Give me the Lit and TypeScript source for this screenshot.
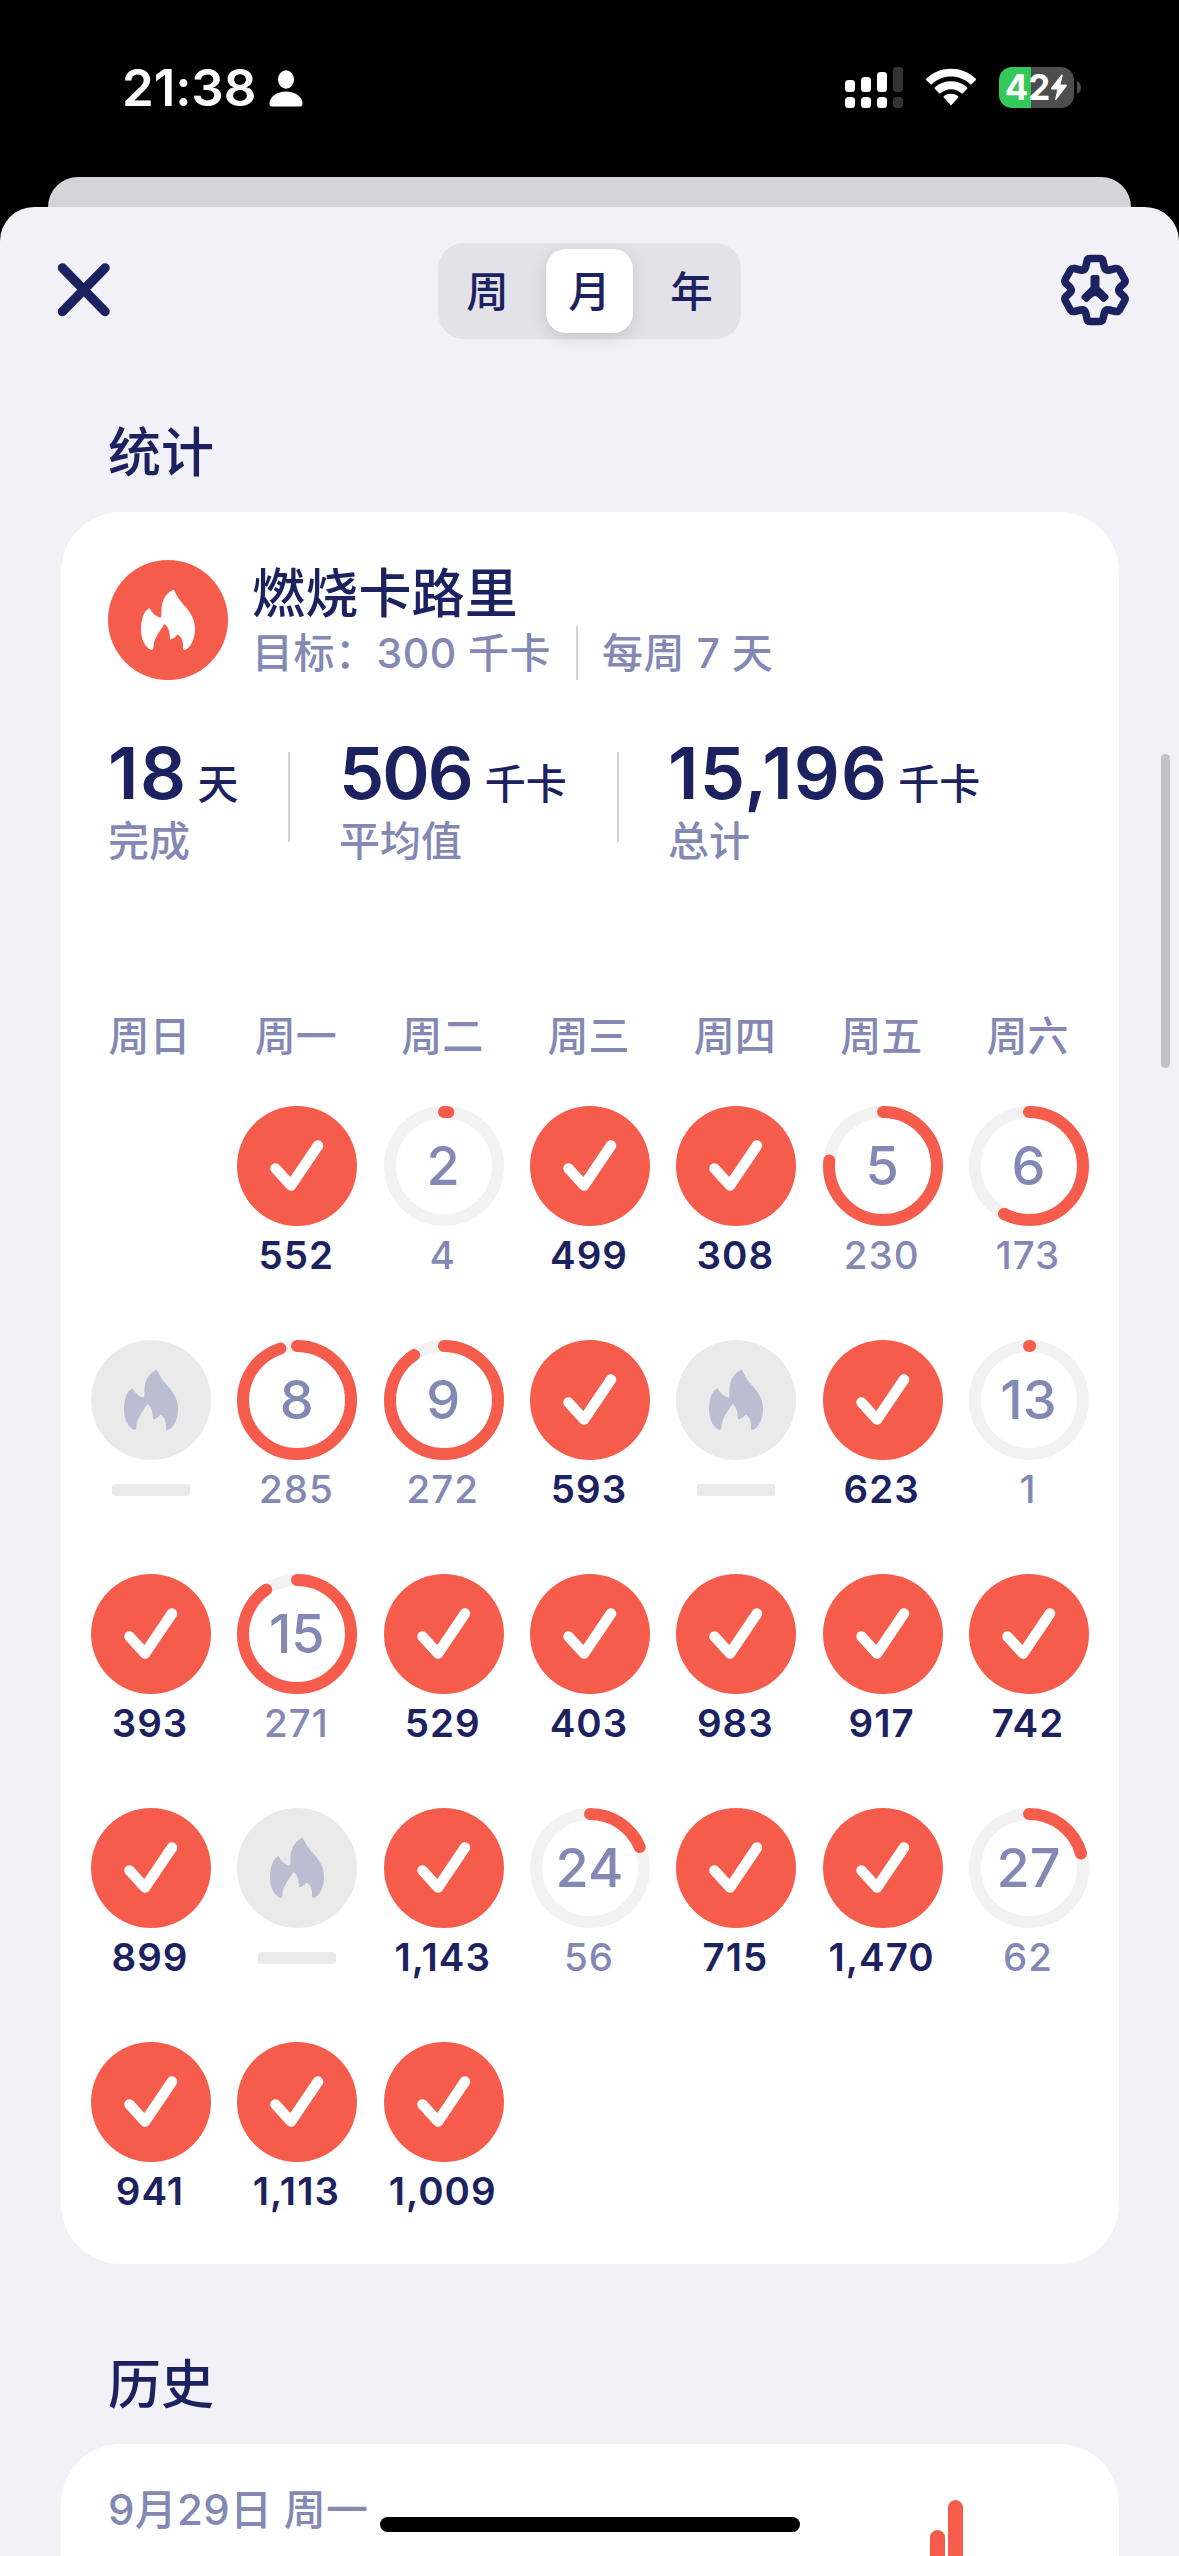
import { LitElement, html, svg, css, nothing } from "lit";
import { customElement, property } from "lit/decorators.js";

type Day = { day: number; value: number | null };

const GOAL = 300;
const WEEKDAYS = ["周日", "周一", "周二", "周三", "周四", "周五", "周六"];
const VALUES: (number | null)[] = [
  552, 4, 499, 308, 230, 173,
  null, 285, 272, 593, null, 623, 1,
  393, 271, 529, 403, 983, 917, 742,
  899, null, 1143, 56, 715, 1470, 62,
  941, 1113, 1009,
];
const DAYS: Day[] = VALUES.map((value, i) => ({ day: i + 1, value }));

const flame = svg`<path d="M64.5 30 C57 34 53.5 42 53.5 50 C53.5 53 53.5 55 53 57.5 C48 57 44 53 41.5 48 C35.5 51 33 60 33 69 C33 79 36.500 87 43.500 90 C45 90 45.500 88.500 45.500 86 C46 77.500 53 70 56.500 64 C60 66 62 72 62 79.500 C66 79 68 76.500 69.500 74.500 C74 77 75.500 82 75 88 C75 90 76.500 90.500 78 89.500 C84 86 87 77 87 69 C87 57 80 49.500 74 43 C70 38 68 34 66.500 31 C66 30 65.500 29.500 64.500 30 Z"/>`;

const shared = css`
  * { box-sizing: border-box; }
  svg { display: block; }
`;

@customElement("status-bar")
export class StatusBar extends LitElement {
  static styles = [shared, css`
    :host {
      display: flex; justify-content: space-between; height: 177px;
      padding: 0 98px 0 122px; color: #fff;
    }
    .left { display: flex; align-items: center; height: 177px; gap: 13px; }
    .time { font-size: 51px; line-height: 60px; font-weight: 600; letter-spacing: -0.1px; margin-top: -1px; }
    .right { display: flex; align-items: flex-start; padding-top: 67px; }
    .wifi { margin: 0 22px; }
    .battery {
      display: flex; align-items: center; justify-content: center; width: 75px; height: 41px;
      border-radius: 13px; background: linear-gradient(90deg, #34c759 32px, #4d4d4d 32px);
      font-size: 35px; font-weight: 700; line-height: 41px;
    }
    .cap { margin: 14px 0 0 3px; }
  `];

  render() {
    return html`
      <div class="left">
        <span class="time">21:38</span>
        <svg width="34" height="37" viewBox="0 0 34 37" fill="#fff">
          <ellipse cx="17" cy="9.500" rx="8" ry="9.200" />
          <path d="M3 36.500 Q.5 36.500 .5 33.500 C.5 27 8 21.500 17 21.500 S33.500 27 33.500 33.500 Q33.500 36.500 31 36.500 Z" />
        </svg>
      </div>
      <div class="right">
        <svg width="58" height="41" viewBox="0 0 58 41" fill="#fff">
          <rect y="13" width="10" height="12" rx="3.500" /><rect y="30" width="10" height="11" rx="3.500" />
          <rect x="16" y="10" width="10" height="15" rx="3.500" /><rect x="16" y="30" width="10" height="11" rx="3.500" />
          <rect x="32" y="5" width="10" height="20" rx="3.500" /><rect x="32" y="30" width="10" height="11" rx="3.500" />
          <g fill="#333"><rect x="48" width="10" height="25" rx="3.500" /><rect x="48" y="30" width="10" height="11" rx="3.500" /></g>
        </svg>
        <svg class="wifi" width="52" height="41" viewBox="0 0 52 41" fill="#fff">
          <path d="M1.500 13.500 Q.5 12.500 1.500 11.500 C15 -1.500 37 -1.500 50.500 11.500 Q51.500 12.500 50.500 13.500 L46.500 17.300 Q46 17.800 45.200 17.200 C34 7 18 7 6.800 17.200 Q6 17.800 5.500 17.300 Z" />
          <path d="M10 22 Q9 21.200 10 20.200 C19 12.300 33 12.300 42 20.200 Q43 21.200 42 22 L37.800 26.300 Q37.200 26.800 36.500 26.200 C30 20.800 22 20.800 15.500 26.200 Q14.800 26.800 14.200 26.300 Z" />
          <path d="M18.800 30.500 Q18 29.800 19 29 C23 26 29 26 33 29 Q34 29.800 33.200 30.500 L26.800 37.500 Q26 38.500 25.200 37.500 Z" />
        </svg>
        <div class="battery"><span>42</span>
          <svg width="18" height="27" viewBox="0 0 18 27" fill="#fff"><path d="M11.500 .5 Q13 0 12.700 1.500 L10.500 10.500 H16 Q17.500 10.800 16.600 12.200 L6.500 25.500 Q5 26.800 5.200 25 L7.300 15.500 H1.800 Q.3 15.200 1.200 13.800 Z" /></svg>
        </div>
        <svg class="cap" width="4" height="13" viewBox="0 0 4 13" fill="#4d4d4d"><path d="M0 0 Q4 2 4 6.500 T0 13 Z" /></svg>
      </div>
    `;
  }
}

@customElement("range-tabs")
export class RangeTabs extends LitElement {
  static styles = [shared, css`
    :host {
      display: grid; grid-template-columns: 87px 87px 87px; gap: 15px; width: 303px; height: 96px;
      padding: 6px; border-radius: 26px; background: #e3e2e8;
      font-size: 42.500px; line-height: 86px; font-weight: 500; text-align: center;
    }
    .tab { height: 84px; border-radius: 20px; }
    .active { background: #fff; box-shadow: 0 5px 16px rgba(0, 0, 0, 0.13); }
  `];

  render() {
    return ["周", "月", "年"].map((t) => html`<div class="tab ${t === "月" ? "active" : ""}">${t}</div>`);
  }
}

@customElement("day-cell")
export class DayCell extends LitElement {
  @property({ attribute: false }) entry!: Day;

  static styles = [shared, css`
    :host { display: flex; flex-direction: column; align-items: center; width: 120px; height: 180px; }
    .badge { display: grid; place-items: center; width: 120px; height: 120px; }
    .badge > * { grid-area: 1 / 1; }
    .num { margin-right: 1px; font-size: 54px; line-height: 60px; font-weight: 550; color: #8388b4; }
    .value {
      margin: 6px 2px 0 0; font-size: 38.500px; line-height: 46px; letter-spacing: 1px;
      font-weight: 600; color: #1c2260; white-space: nowrap;
    }
    .partial { font-weight: 550; color: #8388b4; }
    .dash { width: 78px; height: 12px; margin-top: 24px; border-radius: 3px; background: #eaeaea; }
  `];

  private badge() {
    const { value } = this.entry;
    if (value === null) {
      return svg`<circle cx="60" cy="60" r="60" fill="#eaeaea"/><g fill="#bbbed0">${flame}</g>`;
    }
    if (value >= GOAL) {
      return svg`<circle cx="60" cy="60" r="60" fill="#f65c4b"/>
        <path d="M38.500 62.500 L54 79.500 L81 39.500" fill="none" stroke="#fff" stroke-width="10.500" stroke-linecap="round" stroke-linejoin="round"/>`;
    }
    return svg`<circle cx="60" cy="60" r="54" fill="none" stroke="#f2f2f2" stroke-width="12"/>
      <circle cx="60" cy="60" r="54" fill="none" stroke="#f65c4b" stroke-width="12" stroke-linecap="round"
        pathLength="300" stroke-dasharray="${value} 300" transform="rotate(-90 60 60)"/>`;
  }

  render() {
    const { day, value } = this.entry;
    const partial = value !== null && value < GOAL;
    return html`
      <div class="badge">
        <svg width="120" height="120" viewBox="0 0 120 120">${this.badge()}</svg>
        ${partial ? html`<span class="num">${day}</span>` : nothing}
      </div>
      ${value === null
        ? html`<div class="dash"></div>`
        : html`<div class="value ${partial ? "partial" : ""}">${value.toLocaleString("en-US")}</div>`}
    `;
  }
}

@customElement("app-root")
export class AppRoot extends LitElement {
  static styles = [shared, css`
    :host {
      display: block; position: relative; width: 1179px; height: 2556px; overflow: hidden;
      background: #000; color: #1c2260;
      font-family: Inter, "Noto Sans CJK SC", sans-serif;
    }
    .back { height: 30px; margin: 0 48px; border-radius: 30px 30px 0 0; background: #d5d4d9; }
    .sheet { height: 2349px; padding: 36px 60px 0 61px; border-radius: 34px 34px 0 0; background: #f2f1f7; }
    .bar { display: flex; align-items: center; justify-content: space-between; height: 96px; margin: 0 -11px 0 -4px; }
    .tabs { margin-left: 8px; }
    .heading { margin: 0; padding-left: 47px; font-size: 53px; line-height: 76px; font-weight: 500; }
    .stats { margin-top: 76px; }
    .card { border-radius: 60px; background: #fff; }
    .main { height: 1752px; margin-top: 21px; padding: 48px 30px 0 30px; }
    .goal { display: flex; gap: 24px; height: 120px; padding-left: 17px; }
    .name { margin-top: 2px; font-size: 53px; line-height: 64px; font-weight: 500; letter-spacing: 0.2px; }
    .sub { display: flex; align-items: center; height: 54px; font-size: 41px; font-weight: 500; letter-spacing: 0.5px; color: #8388b4; white-space: nowrap; }
    .sub span { position: relative; top: -3px; }
    .rule { width: 2px; height: 54px; margin: 0 24px 0 25px; background: #d2d2d6; }
    .totals { display: flex; height: 146px; margin-top: 48px; padding-left: 17px; white-space: nowrap; }
    .total { height: 146px; }
    .days-done { width: 131px; letter-spacing: 1.500px; }
    .average { width: 229px; letter-spacing: -2px; }
    .sum { letter-spacing: 1.200px; }
    .amount {
      display: flex; align-items: baseline; gap: 10px; height: 88px; padding-top: 1px;
      font-size: 72px; line-height: 88px; font-weight: 600;
    }
    .average .amount { gap: 13px; }
    .unit { font-size: 41px; font-weight: 500; letter-spacing: 0; }
    .label { margin-top: -5px; font-size: 41px; line-height: 60px; font-weight: 500; letter-spacing: 0; color: #8388b4; }
    .split { width: 2px; height: 90px; margin: 24px 49px 0; background: #d2d2d6; }
    .grid { display: grid; grid-template-columns: repeat(7, 120px); justify-content: space-between; }
    .week { margin-top: 132px; font-size: 41px; line-height: 60px; font-weight: 500; color: #8388b4; text-align: center; }
    .week div { margin-right: 3px; }
    .days { row-gap: 54px; margin-top: 40px; }
    .day1 { grid-column-start: 2; }
    .past { margin-top: 83px; }
    .history {
      display: flex; justify-content: space-between; height: 112px; margin-top: 21px;
      padding: 36px 156px 0 47px; border-radius: 60px 60px 0 0;
    }
    .date { font-size: 42px; line-height: 60px; font-weight: 500; letter-spacing: 0.3px; color: #8388b4; }
    .bars { display: flex; align-items: flex-end; gap: 3px; height: 76px; }
    .col { width: 15px; border-radius: 8px 8px 0 0; background: #f65c4b; }
    .thumb { position: absolute; left: 1161px; top: 754px; width: 9px; height: 314px; border-radius: 5px; background: #c2c1c7; }
    .home { position: absolute; left: 380px; top: 2517px; width: 420px; height: 15px; border-radius: 8px; background: #000; }
  `];

  private total(kind: string, amount: string, unit: string, label: string) {
    return html`<div class="total ${kind}">
      <div class="amount">${amount}<span class="unit">${unit}</span></div>
      <div class="label">${label}</div>
    </div>`;
  }

  render() {
    return html`
      <status-bar></status-bar>
      <div class="back"></div>
      <main class="sheet">
        <div class="bar">
          <svg width="54" height="56" viewBox="0 0 54 56" fill="none" stroke="#1c2260" stroke-width="9.500" stroke-linecap="round">
            <path d="M5.500 5 L48 48.500 M48 5 L5.500 48.500" />
          </svg>
          <range-tabs class="tabs"></range-tabs>
          <svg width="70" height="74" viewBox="0 0 70 74" fill="none" stroke="#1c2260" stroke-width="7.500" stroke-linejoin="round" stroke-linecap="round">
            <path d="M30 4.500 H40 Q42.500 4.500 43 7 L44.300 13 Q45.500 17 49.500 16 L55.500 14.500 Q58 14 59.500 16 L64.500 25 Q66 27.500 64 29.500 L60 33.300 Q57.500 36 60 38.700 L64 42.500 Q66 44.500 64.500 47 L59.500 56 Q58 58 55.500 57.500 L49.500 56 Q45.500 55 44.300 59 L43 65 Q42.500 67.500 40 67.500 H30 Q27.500 67.500 27 65 L25.700 59 Q24.500 55 20.500 56 L14.500 57.500 Q12 58 10.500 56 L5.500 47 Q4 44.500 6 42.500 L10 38.700 Q12.500 36 10 33.300 L6 29.500 Q4 27.500 5.500 25 L10.500 16 Q12 14 14.500 14.500 L20.500 16 Q24.500 17 25.700 13 L27 7 Q27.500 4.500 30 4.500 Z" />
            <path stroke="none" fill="#1c2260" d="M33 21 H37 Q39.500 21 39.500 23.500 V33 L48 41.300 Q49.500 43 48 44.700 L45.500 47.200 Q43.500 48.700 41.800 47.200 L37 42.700 Q35 41.500 33 42.700 L28.200 47.200 Q26.500 48.700 24.500 47.200 L22 44.700 Q20.500 43 22 41.300 L30.500 33 V23.500 Q30.500 21 33 21 Z" />
          </svg>
        </div>
        <h2 class="heading stats">统计</h2>
        <section class="card main">
          <div class="goal">
            <svg width="120" height="120" viewBox="0 0 120 120"><circle cx="60" cy="60" r="60" fill="#f65c4b" /><g fill="#fff">${flame}</g></svg>
            <div>
              <div class="name">燃烧卡路里</div>
              <div class="sub"><span>目标：300 千卡</span><i class="rule"></i><span>每周 7 天</span></div>
            </div>
          </div>
          <div class="totals">
            ${this.total("days-done", "18", "天", "完成")}<i class="split"></i>
            ${this.total("average", "506", "千卡", "平均值")}<i class="split"></i>
            ${this.total("sum", "15,196", "千卡", "总计")}
          </div>
          <div class="grid week">${WEEKDAYS.map((d) => html`<div>${d}</div>`)}</div>
          <div class="grid days">
            ${DAYS.map((d) => html`<day-cell class="day${d.day}" .entry=${d}></day-cell>`)}
          </div>
        </section>
        <h2 class="heading past">历史</h2>
        <section class="card history">
          <div class="date">9月29日 周一</div>
          <div class="bars">
            <div class="col" style="height:26px"></div>
            <div class="col" style="height:56px"></div>
          </div>
        </section>
      </main>
      <div class="thumb"></div>
      <div class="home"></div>
    `;
  }
}
